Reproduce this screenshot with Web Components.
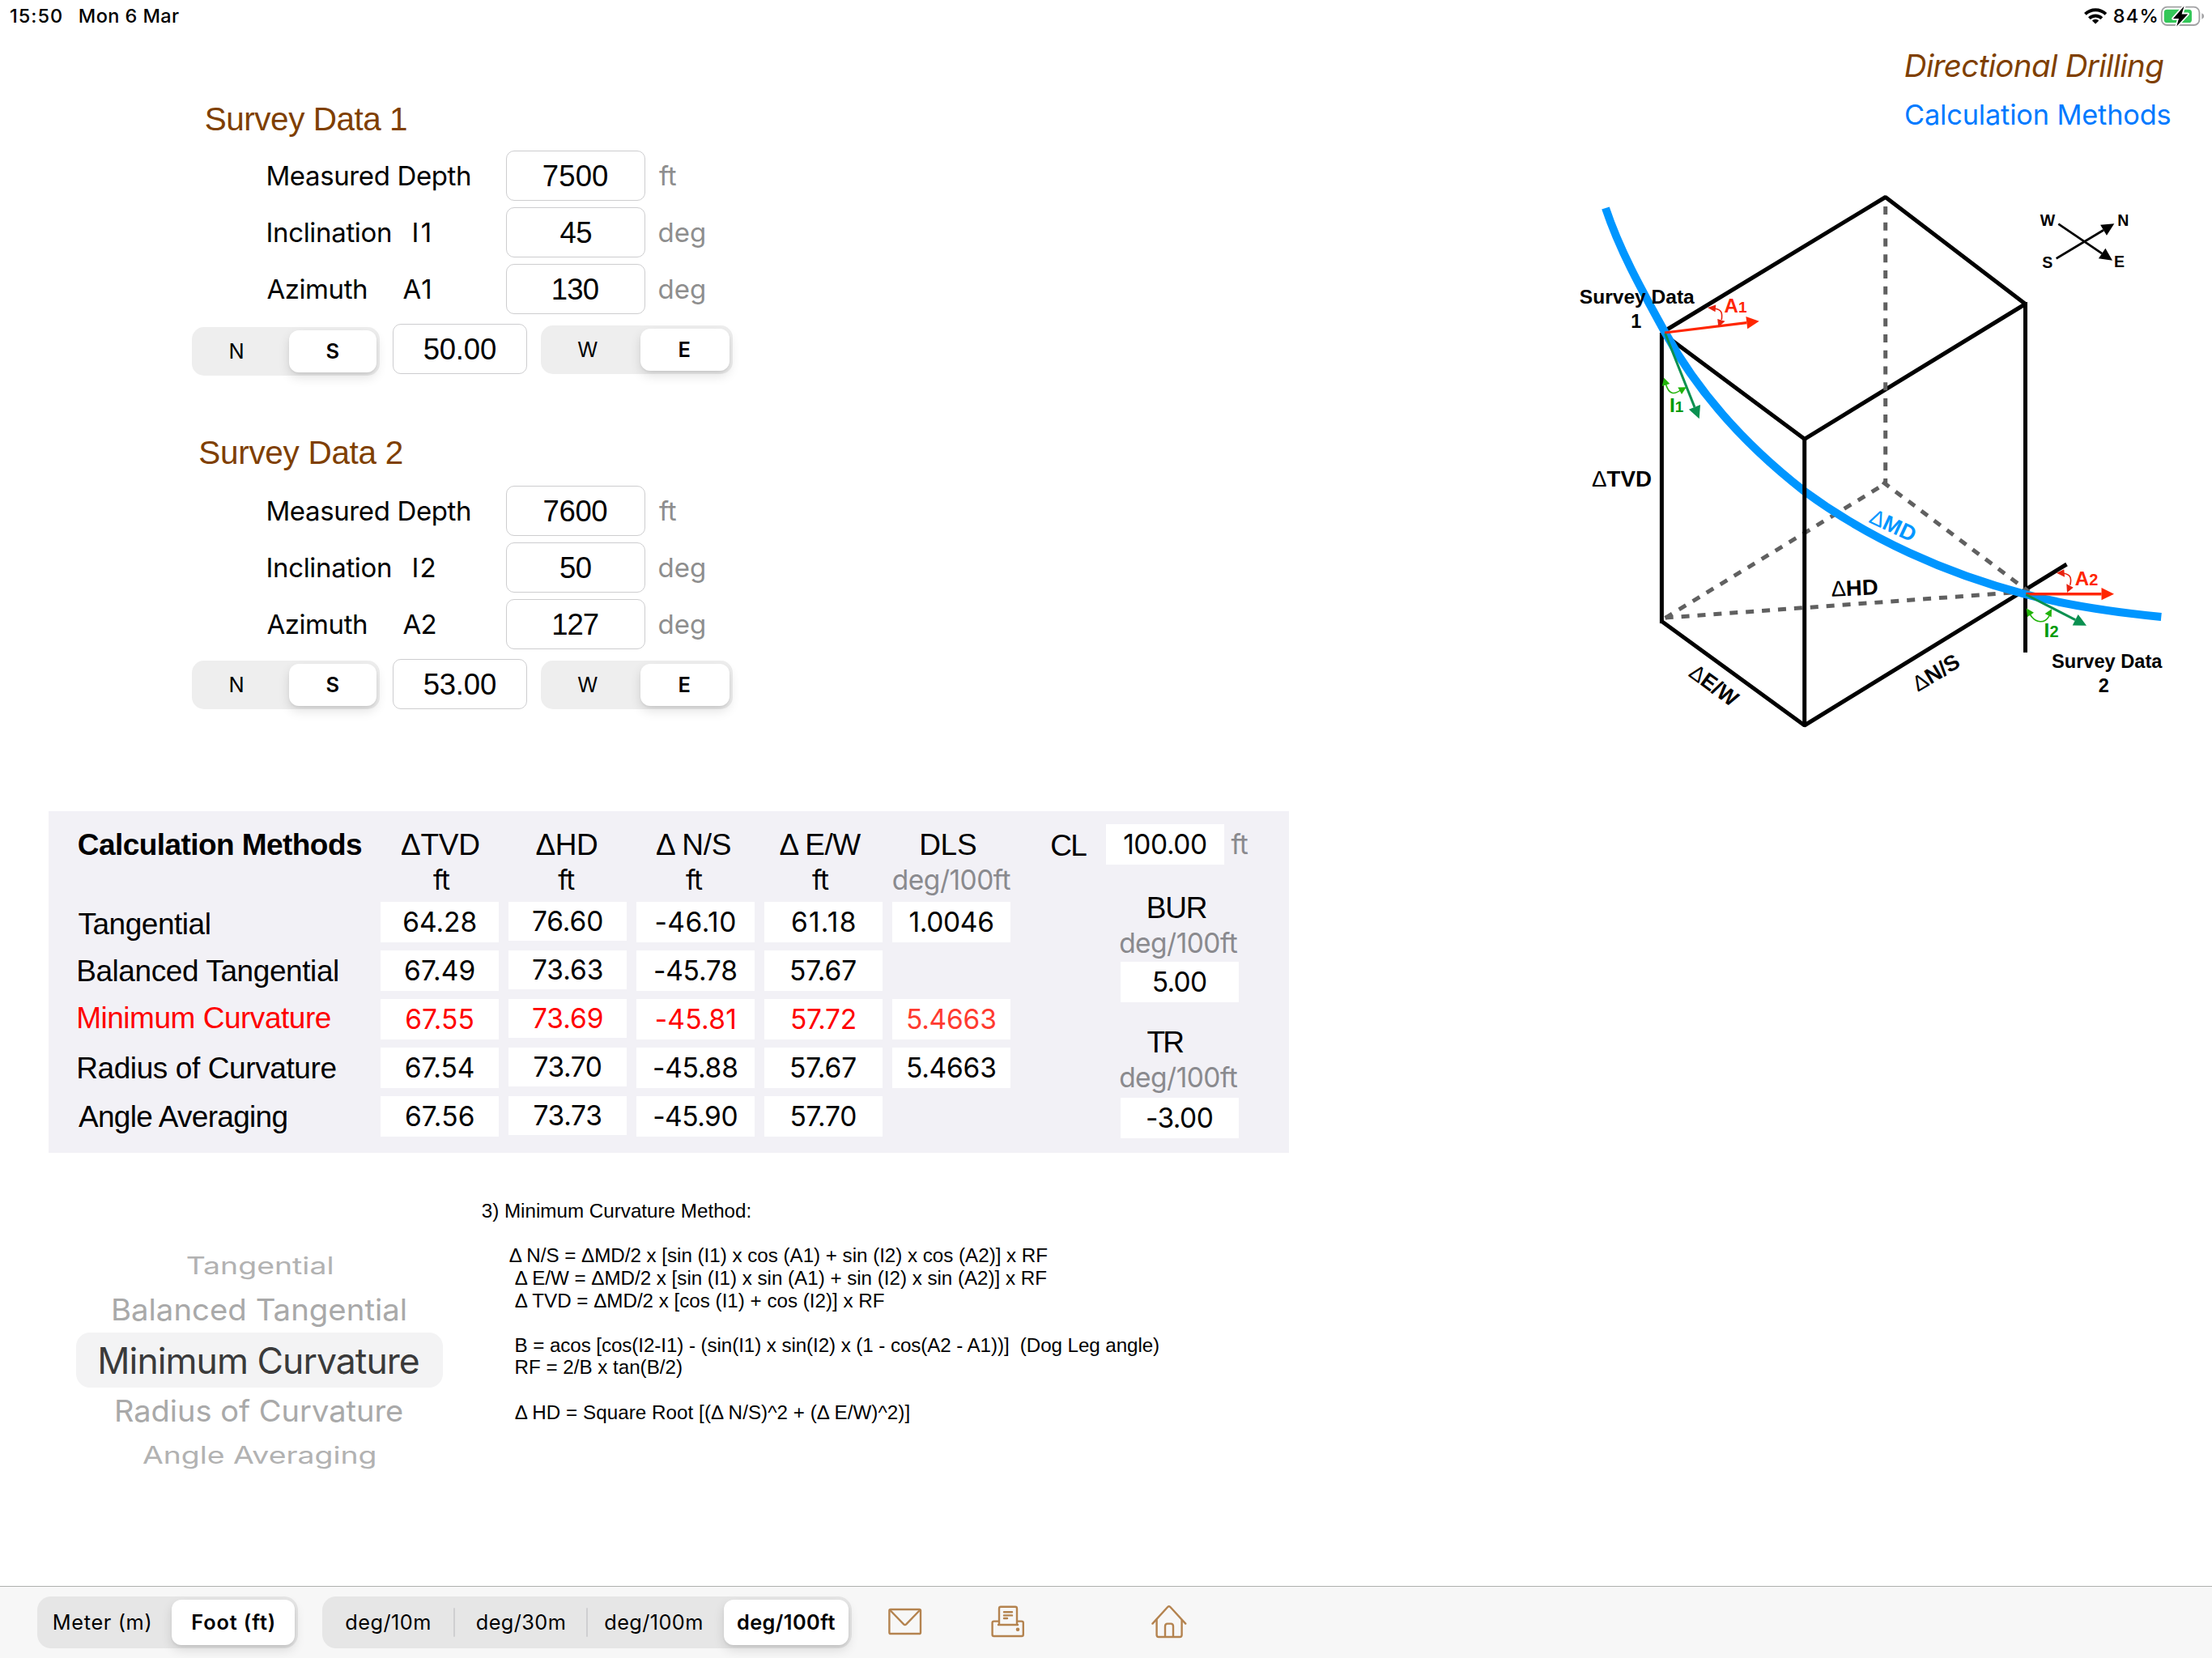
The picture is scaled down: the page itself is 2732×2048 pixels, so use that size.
<!DOCTYPE html>
<html lang="en">
<head>
<meta charset="utf-8">
<title>Directional Drilling</title>
<style>
  html, body { margin: 0; padding: 0; background: #fff; }
  body { width: 2732px; height: 2048px; overflow: hidden; font-family: Inter, "Liberation Sans", sans-serif; color: #000; }
</style>
</head>
<body>
<drilling-app></drilling-app>
<script>
const FONTS = { i: 'Inter, sans-serif', h: '"Liberation Sans", sans-serif' };
const CAPS = { i: 0.727, h: 0.688 };
const pen = document.createElement('canvas').getContext('2d');

/* One line of text whose box is its cap height by its drawn width. */
class CapText extends HTMLElement {
  connectedCallback() {
    if (this.shadowRoot) return;
    const a = n => this.getAttribute(n);
    const f = a('f') || 'i', s = +a('s'), wt = a('b') || 400;
    const it = this.hasAttribute('italic') ? 'italic' : 'normal';
    const text = this.textContent;
    /* Side bearings come from a tenfold size, where whole-pixel bounds lose nothing. */
    pen.font = `${it} ${wt} ${s * 10}px ${FONTS[f]}`;
    const big = pen.measureText(text);
    const lsb = -big.actualBoundingBoxLeft / 10;
    const rsb = (big.width - big.actualBoundingBoxRight) / 10;
    pen.font = `${it} ${wt} ${s}px ${FONTS[f]}`;
    const ink = pen.measureText(text).width - lsb - rsb;
    const w = a('w') ? +a('w') : ink;
    const dy = f === 'h' ? 0.8 : 0;
    let fit = dy ? `transform:translateY(${dy}px);` : '';
    if (this.hasAttribute('stretch')) fit = `transform-origin:${lsb}px 50%;transform:scaleX(${w / ink});`;
    else if (text.length > 1) fit += `letter-spacing:${(w - ink) / (text.length - 1)}px;`;
    const h = (s * CAPS[f]).toFixed(2);
    this.attachShadow({ mode: 'open' }).innerHTML = `<style>
      :host{display:block;flex:none;width:${w.toFixed(1)}px;height:${h}px;${a('c') ? `color:${a('c')};` : ''}}
      span{display:block;width:max-content;margin-left:${(-lsb).toFixed(2)}px;white-space:pre;
        font:${it} ${wt} ${s}px/${h}px ${FONTS[f]};${fit}}
    </style><span><slot></slot></span>`;
  }
}
customElements.define('cap-text', CapText);

const T = (text, s, w, o = '') => `<cap-text s="${s}" w="${w}" ${o}>${text}</cap-text>`;
/* Flex row / column: every item is [start, size, markup]; the gap to the previous one becomes its margin. */
const flow = (dir, from, items) => {
  let at = from;
  return items.map(([p, size, html, extra = '']) => {
    const gap = (p - at).toFixed(1); at = p + size;
    return dir === 'row'
      ? `<div style="flex:none;width:${size}px;margin-left:${gap}px;${extra}">${html}</div>`
      : `<div style="flex:none;height:${size}px;margin-top:${gap}px;${extra}">${html}</div>`;
  }).join('');
};
const row = (from, items, st = '') => `<div style="display:flex;align-items:flex-start;${st}">${flow('row', from, items)}</div>`;
const col = (from, items, st = '') => `<div style="display:flex;flex-direction:column;align-items:flex-start;${st}">${flow('col', from, items)}</div>`;
/* Column item standing on a baseline. */
const base = (y, x, text, s, w, f = 'i', o = '') => {
  const h = s * CAPS[f];
  return [y + 0.8 - h, h, T(text, s, w, `f="${f}" ${o}`), `margin-left:${x}px`];
};

const define = (name, make) => customElements.define(name, class extends HTMLElement {
  connectedCallback() {
    if (!this.shadowRoot) this.attachShadow({ mode: 'open' }).innerHTML = make(this);
  }
});

define('value-field', el => `<style>
  :host{display:flex;align-items:center;justify-content:center;box-sizing:border-box;width:${el.getAttribute('width')}px;height:${el.getAttribute('height')}px;background:#fff;}
  :host([bordered]){border:1.5px solid #cdcdcf;border-radius:10px;}
</style><slot></slot>`);

define('segment-set', el => `<style>
  :host{display:flex;box-sizing:border-box;border-radius:${el.getAttribute('r') || 15}px;background:${el.getAttribute('bg') || '#eeeeee'};
    height:${el.getAttribute('h')}px;padding:4px 4px;align-items:stretch;}
</style><slot></slot>`);

define('segment-item', el => `<style>
  :host{display:flex;flex:none;box-sizing:border-box;align-items:center;justify-content:center;width:${el.getAttribute('width')}px;border-radius:12px;
    padding-right:${el.getAttribute('trail') || 0}px;}
  :host([on]){background:#fff;box-shadow:0 6px 14px rgba(0,0,0,.12),0 2px 3px rgba(0,0,0,.06);}
</style><slot></slot>`);

define('segment-rule', () => `<style>:host{display:block;flex:none;width:2px;height:36px;align-self:center;background:#cfcfd1;border-radius:1px}</style>`);

define('survey-panel', el => {
  const d = JSON.parse(el.getAttribute('data'));
  const field = (v, w, width = 172) => `<value-field bordered width="${width}" height="62">${T(v, 36.5, w, 'f="h"')}</value-field>`;
  const seg = (wA, trail, a, aw, b, bw, sel, total, mt) => `<segment-set h="60" style="width:${total}px;margin-top:${mt}px">
    <segment-item width="${wA}" trail="${trail}">${T(a, 25.5, aw)}</segment-item>
    <segment-item on width="${sel}">${T(b, 25.5, bw, 'b="600"')}</segment-item></segment-set>`;
  return `<style>
    :host{display:block;}
    .title{margin-left:${d.tx}px;margin-bottom:${d.gap}px;}
  </style>
  <div class="title">${T('Survey Data ' + d.n, 40.5, d.tw, 'f="h" c="#7f3f00"')}</div>
  ${[['Measured Depth', 249, '', 0, 0, d.v[0], d.vw[0], 'ft', 21],
     ['Inclination', 151, 'I' + d.n, 511, d.iw, d.v[1], d.vw[1], 'deg', 56],
     ['Azimuth', 122, 'A' + d.n, 498, d.aw, d.v[2], d.vw[2], 'deg', 56]].map(r => {
       const x0 = r[0] === 'Azimuth' ? 330 : 331;
       const items = [[x0, r[1], T(r[0], 33, r[1])]];
       if (r[2]) items.push([r[3], r[4], T(r[2], 33, r[4])]);
       items.push([625, 172, field(r[5], r[6])], [814, r[8], T(r[7], 33, r[8], 'c="#8e8e8e"')]);
       return row(0, items, 'align-items:center;height:62px;margin-bottom:8px');
     }).join('')}
  ${row(0, [
    [237, 232, seg(116, 12, 'N', 16.5, 'S', 14.8, 108, 232, d.ns)],
    [485, 166, field(d.v[3], 88.5, 166)],
    [667.7, 237, seg(119, 11, 'W', 23.5, 'E', 12.6, 110, 237, 2)]
  ], 'margin-top:12px;height:66px')}`;
});

define('results-table', () => {
  const red = 'c="#ff0000"';
  const val = (v, w, y, h = 50, o = '') => [y, h, `<value-field width="146" height="${h}">${T(v, 33.5, w, o)}</value-field>`];
  const ys = [1114, 1174, 1234, 1294, 1354];
  const data = [
    [['64.28', 88.5], ['67.49', 84.7], ['67.55', 82.5], ['67.54', 83.5], ['67.56', 83]],
    [['76.60', 85], ['73.63', 85], ['73.69', 85], ['73.70', 82], ['73.73', 82]],
    [['-46.10', 97], ['-45.78', 100], ['-45.81', 96.5], ['-45.88', 102], ['-45.90', 101.5]],
    [['61.18', 77], ['57.67', 80], ['57.72', 78], ['57.67', 80], ['57.70', 79]],
    [['1.0046', 102], null, ['5.4663', 108], ['5.4663', 108], null]
  ];
  const cells = (c, h) => data[c].map((d, r) => d && val(d[0], d[1], ys[r], h, r === 2 ? (c === 4 ? 'c="#ff3b30"' : red) : '')).filter(Boolean);
  const column = (c, h, head, unit) => col(1002, [head, unit, ...cells(c, h)]);
  const H = (x, t, w) => base(1055, x, t, 37, w, 'h');
  const U = (x, t = 'ft', w = 20.5, o = '') => base(1098.7, x, t, 33.5, w, 'i', o);
  const gray = 'c="#8a8a8e"';
  return `<style>:host{display:block;width:1532px;height:422px;background:#f2f1f6}</style>
  ${row(60, [
    [97, 349, col(1002, [
      base(1055, 0, 'Calculation Methods', 37, 349, 'h', 'b="700"'),
      base(1153, 0, 'Tangential', 37, 161.5, 'h'),
      base(1211, 0, 'Balanced Tangential', 37, 320.5, 'h'),
      base(1269, 0, 'Minimum Curvature', 37, 310.8, 'h', red),
      base(1330.7, 0, 'Radius of Curvature', 37, 317.5, 'h'),
      base(1390.7, 0, 'Angle Averaging', 37, 259, 'h')])],
    [470, 146, column(0, 50, H(25.6, 'ΔTVD', 96), U(65))],
    [628, 146, column(1, 48, H(34, 'ΔHD', 75.5), U(61.3))],
    [786, 146, column(2, 50, H(24.5, 'Δ N/S', 93.5), U(61))],
    [944, 146, column(3, 50, H(19, 'Δ E/W', 102.5), U(59))],
    [1102, 146, column(4, 50, H(36, 'DLS', 67), U(1.4, 'deg/100ft', 144.6, gray))],
    [1299, 43, col(1002, [base(1056, 0, 'CL', 37, 43, 'h')])],
    [1366, 176, col(1002, [
      [1018, 50, row(1366, [
        [1366, 146, `<value-field width="146" height="50">${T('100.00', 33.5, 100.6)}</value-field>`],
        [1520.6, 20.6, T('ft', 33.5, 20.6, gray)]], 'align-items:center')],
      base(1133, 52.7, 'BUR', 37, 71.5, 'h'),
      base(1176.7, 17.7, 'deg/100ft', 33.5, 144.4, 'i', gray),
      [1188, 50, `<value-field width="146" height="50" style="margin-left:18px">${T('5.00', 33.5, 64.5)}</value-field>`],
      base(1299, 51, 'TR', 37, 44.6, 'h'),
      base(1343, 17.7, 'deg/100ft', 33.5, 144.4, 'i', gray),
      [1356, 50, `<value-field width="146" height="50" style="margin-left:18px">${T('-3.00', 33.5, 80)}</value-field>`]
    ])]
  ])}`;
});

define('method-picker', () => `<style>
  :host{display:block;width:453px}
  .on{display:flex;height:68px;align-items:center;justify-content:center;border-radius:17px;background:#f3f3f4;width:453px}
  .on cap-text{margin-top:1.5px}
</style>
${col(1440, [
  base(1573.7, 137, 'Tangential', 29.5, 178.5, 'i', 'stretch c="#b2b2b2"'),
  base(1631, 46.2, 'Balanced Tangential', 37, 360.5, 'i', 'stretch c="#a9a9a9"'),
  [1646, 68, `<div class="on">${T('Minimum Curvature', 44.5, 393.4, 'c="#3a3a3a"')}</div>`],
  base(1756.4, 49.6, 'Radius of Curvature', 37, 353, 'i', 'stretch c="#a9a9a9"'),
  base(1807.3, 82.4, 'Angle Averaging', 29.5, 286.6, 'i', 'stretch c="#b2b2b2"')
])}`);

define('method-notes', () => {
  const L = (y, x, t, w) => base(y, x - 595.6, t, 24.2, w, 'h');
  return `<style>:host{display:block}</style>${col(1440, [
    L(1503, 595.6, '3) Minimum Curvature Method:', 330.5),
    L(1558, 629.5, 'Δ N/S = ΔMD/2 x [sin (I1) x cos (A1) + sin (I2) x cos (A2)] x RF', 665),
    L(1585.7, 636.4, 'Δ E/W = ΔMD/2 x [sin (I1) x sin (A1) + sin (I2) x sin (A2)] x RF', 657),
    L(1613.3, 636.4, 'Δ TVD = ΔMD/2 x [cos (I1) + cos (I2)] x RF', 456.5),
    L(1668.3, 637.5, 'B = acos [cos(I2-I1) - (sin(I1) x sin(I2) x (1 - cos(A2 - A1))]  (Dog Leg angle)', 794.5),
    L(1696, 637.5, 'RF = 2/B x tan(B/2)', 204),
    L(1751.3, 636.4, 'Δ HD = Square Root [(Δ N/S)^2 + (Δ E/W)^2)]', 490)
  ])}`;
});

/* Shaft from (x1,y1) to a filled head whose tip is (x2,y2). */
const arrow = (x1, y1, x2, y2, c, w, len = 15.5, half = 7.6) => {
  const d = Math.hypot(x2 - x1, y2 - y1), ux = (x2 - x1) / d, uy = (y2 - y1) / d;
  const bx = x2 - ux * len, by = y2 - uy * len;
  return `<path d="M${x1} ${y1}L${bx} ${by}" stroke="${c}" stroke-width="${w}"/>
    <path d="M${x2} ${y2}L${bx - uy * half} ${by + ux * half}L${bx + uy * half} ${by - ux * half}Z" fill="${c}" stroke="none"/>`;
};

define('trajectory-diagram', () => {
  const dl = '<tspan font-weight="400">Δ</tspan>';
  return `<style>
  :host{display:block;width:832px;height:720px}
  svg{display:block} text{font-family:"Liberation Sans",sans-serif;font-weight:700;stroke:none}
</style>
<svg width="832" height="720" viewBox="1900 200 832 720" fill="none">
  <g stroke="#000" stroke-width="5">
    <path d="M2052.4 411V770"/>
    <path d="M2052.4 411L2328.7 243.5L2501.5 375.5L2228.7 542.3Z" stroke-linejoin="bevel"/>
    <path d="M2501.5 373V806"/>
    <path d="M2052.4 767.5L2228.7 896L2552.5 697" stroke-linejoin="bevel"/>
  </g>
  <g stroke="#606060" stroke-width="5">
    <path d="M2328.7 255V598" stroke-dasharray="10 9.76"/>
    <path d="M2056.7 763.3L2328.7 597.3" stroke-dasharray="10 9.92"/>
    <path d="M2056.7 763.1L2500 731" stroke-dasharray="10 9.95"/>
    <path d="M2325.3 595.3L2506 731" stroke-dasharray="10 9.83"/>
  </g>
  <path d="M1983 257C2001 311 2029.2 361 2056.7 411C2099 488 2159.2 552.6 2228.5 606.7C2309 666 2404.5 708.8 2501.3 734C2556 748.4 2612.6 756.3 2669.3 762" stroke="#0096ff" stroke-width="10"/>
  <path d="M2228.7 541V897" stroke="#000" stroke-width="5"/>
  ${arrow(2056, 411, 2172.7, 396.7, '#ff2600', 3.2)}
  ${arrow(2056.7, 412, 2098.7, 517.3, '#0a9050', 3)}
  ${arrow(2502.3, 733.7, 2611, 733.7, '#ff2600', 3.4)}
  ${arrow(2502.3, 734.5, 2577, 772.7, '#0a9050', 3)}
  ${arrow(2542.3, 276.7, 2609, 321.7, '#000', 2.7)}
  ${arrow(2539.7, 319.3, 2611.3, 276.3, '#000', 2.7)}
  <g stroke="#e8220f" stroke-width="1.6">
    <path d="M2118 381.3C2126 382.5 2127.5 386 2126.3 395"/>
    <path d="M2109 380L2119.3 376.5L2118.5 385.2ZM2122.3 404L2121.2 394L2130.6 396.8Z" fill="#e8220f" stroke="none"/>
    <path d="M2549 708.3C2557 709.5 2559 714 2556.7 722.7"/>
    <path d="M2540 707.7L2549.3 703.3L2550 712.7ZM2553 732L2552.3 721.3L2560.7 725.7Z" fill="#e8220f" stroke="none"/>
  </g>
  <g stroke="#22b40a" stroke-width="1.6">
    <path d="M2057.6 475C2061 487 2068 488 2076 481.5"/>
    <path d="M2055.2 466.7L2052.8 477L2062.3 474ZM2082.8 478.3L2072.3 478.6L2077 487Z" fill="#22b40a" stroke="none"/>
    <path d="M2507.3 759C2514 770 2526 771 2531.3 760"/>
    <path d="M2502.7 751.3L2504 762L2512 756.7ZM2534 752.3L2525.6 758L2533.7 762.3Z" fill="#22b40a" stroke="none"/>
  </g>
  <g font-size="23.5" fill="#000">
    <text x="1950.8" y="375" textLength="142" lengthAdjust="spacingAndGlyphs">Survey Data</text><text x="2014.2" y="405">1</text>
    <text x="2534" y="825" textLength="136.5" lengthAdjust="spacingAndGlyphs">Survey Data</text><text x="2591.8" y="855.3">2</text>
  </g>
  <g font-size="24" fill="#ff2600">
    <text x="2129.6" y="385.7">A<tspan font-size="19">1</tspan></text>
    <text x="2562.8" y="723.3">A<tspan font-size="20">2</tspan></text>
  </g>
  <g font-size="24.5" fill="#009a08">
    <text x="2062" y="509">I<tspan font-size="19">1</tspan></text>
    <text x="2524.6" y="787">I<tspan font-size="20">2</tspan></text>
  </g>
  <g font-size="27" fill="#000">
    <text x="1966" y="601" textLength="74" lengthAdjust="spacingAndGlyphs">${dl}TVD</text>
    <text transform="translate(2262 736.7) rotate(-2.5)" textLength="58" lengthAdjust="spacingAndGlyphs">${dl}HD</text>
    <text transform="translate(2084.3 834.3) rotate(36)" textLength="67" lengthAdjust="spacingAndGlyphs">${dl}E/W</text>
    <text transform="translate(2368.8 855) rotate(-31)" textLength="63" lengthAdjust="spacingAndGlyphs">${dl}N/S</text>
    <text transform="translate(2307 644.7) rotate(25)" textLength="60" lengthAdjust="spacingAndGlyphs" fill="#0096ff">${dl}MD</text>
  </g>
  <g font-size="19.5" fill="#000">
    <text x="2519.8" y="278.5">W</text><text x="2615.3" y="278.5">N</text>
    <text x="2522.3" y="331.3">S</text><text x="2611" y="330.3">E</text>
  </g>
</svg>`;
});

define('status-bar', () => `<style>:host{display:flex;height:40px;align-items:flex-start}
  svg{display:block}</style>
${row(0, [
  [13, 63, T('15:50', 23.5, 63, 'b="450"'), 'margin-top:11px'],
  [98.6, 122, T('Mon 6 Mar', 23.5, 122, 'b="450"'), 'margin-top:11px'],
  [2572, 32, `<svg width="32" height="40" viewBox="2572 0 32 40" fill="none" stroke="#000" stroke-width="3.9">
    <path d="M2575.4 17.4A18.5 18.5 0 0 1 2600.9 17.4"/><path d="M2580.4 22.6A11.2 11.2 0 0 1 2595.9 22.6"/>
    <path d="M2588.1 29.6L2583.9 25.4A6 6 0 0 1 2592.3 25.4Z" fill="#000" stroke="none"/></svg>`],
  [2611, 52.3, T('84%', 23.5, 52.3, 'b="450"'), 'margin-top:11px'],
  [2668, 56, `<svg width="56" height="40" viewBox="2668 0 56 40">
    <rect x="2669.8" y="8.6" width="46.6" height="22.4" rx="6.8" fill="none" stroke="#a2a2a4" stroke-width="1.8"/>
    <path d="M2719.4 16.2Q2722.2 17.3 2722.2 20T2719.4 23.8Z" fill="#a2a2a4"/>
    <rect x="2672.8" y="11.8" width="34.2" height="16.2" rx="3.6" fill="#34c759"/>
    <path d="M2697.6 7.6L2684 23H2691L2688.3 32.4L2702.2 17.4H2694.6Z" fill="#000" stroke="#fff" stroke-width="3.6" stroke-linejoin="round" paint-order="stroke"/></svg>`]
])}`);

define('tool-bar', () => {
  const seg = (width, text, w, trail = 0, on) => `<segment-item width="${width}" trail="${trail}" ${on ? 'on' : ''}>${T(text, 25.3, w, `b="${on ? 600 : 400}"`)}</segment-item>`;
  const icon = (w, x, body) => `<svg width="${w}" height="60" viewBox="${x} 1975 ${w} 60" fill="none" stroke="#b4834f" stroke-width="2.4" stroke-linejoin="round" stroke-linecap="round">${body}</svg>`;
  return `<style>:host{display:block;height:89px;box-sizing:border-box;border-top:1px solid #aeb1ae;background:#f7f7f7}svg{display:block}</style>
  ${row(0, [
    [46, 322, `<segment-set h="64" r="17" bg="#e6e6e6">${seg(162, 'Meter (m)', 118, 10)}${seg(152, 'Foot (ft)', 100, 0, 1)}</segment-set>`],
    [398, 654, `<segment-set h="64" r="17" bg="#e6e6e6">${seg(158, 'deg/10m', 103, 4)}<segment-rule></segment-rule>${seg(162, 'deg/30m', 108)}<segment-rule></segment-rule>${seg(168, 'deg/100m', 119, 6)}${seg(154, 'deg/100ft', 120, 0, 1)}</segment-set>`],
    [1096, 44, icon(44, 1096, '<rect x="1098.4" y="1988" width="38.6" height="30" rx="1.6"/><path d="M1099.4 1989L1116.2 2006.4Q1117.7 2007.8 1119.2 2006.4L1136 1989"/>'), 'margin-top:3px'],
    [1223, 44, icon(44, 1223, '<path d="M1234 2006.2V1987Q1234 1984.8 1236 1984.8H1254Q1256 1984.8 1256 1987V2006.2"/><path d="M1233 2002.6H1227.5Q1225.6 2002.6 1225.6 2004.6V2019Q1225.6 2021 1227.5 2021H1261.8Q1263.8 2021 1263.8 2019V2004.6Q1263.8 2002.6 1261.8 2002.6H1257"/><path d="M1233 2007H1257"/><path d="M1240 1991.2H1250M1240 1995.4H1250M1240 1999H1244"/><ellipse cx="1257" cy="2012.8" rx="1.6" ry="1.6" fill="#b4834f" stroke-width="1.4"/>'), 'margin-top:3px'],
    [1421, 46, icon(46, 1421, '<path d="M1423.4 2005.6L1442.2 1985Q1443.8 1983.4 1445.4 1985L1464.3 2005.6"/><path d="M1428.6 2001V2019.6Q1428.6 2022 1431 2022H1457.2Q1459.6 2022 1459.6 2019.6V2001"/><path d="M1439 2021.5V2009Q1439 2005.6 1441.8 2005.6H1446.2Q1449 2005.6 1449 2009V2021.5"/>'), 'margin-top:3px']
  ], 'padding-top:12px')}`;
});

define('drilling-app', () => {
  const s1 = { n: 1, tx: 254, tw: 248, gap: 25, iw: 19.5, aw: 33, v: ['7500', '45', '130', '50.00'], vw: [79, 38, 56, 0], ns: 4 };
  const s2 = { n: 2, tx: 246.6, tw: 250, gap: 27, iw: 25.5, aw: 39.5, v: ['7600', '50', '127', '53.00'], vw: [77.5, 38, 55, 0], ns: 2 };
  const panel = d => `<survey-panel data='${JSON.stringify(d)}'></survey-panel>`;
  return `<style>
    :host{display:flex;flex-direction:column;width:2732px;height:2048px;background:#fff}
    main{display:flex;height:1919px}
    .left{width:1900px}.right{width:832px}
  </style>
  <status-bar></status-bar>
  <main>
    <div class="left">${col(40, [
      [133.1, 331, panel(s1)],
      [545.1, 331, panel(s2)],
      [1002, 422, '<results-table></results-table>', 'margin-left:60px'],
      [1440, 400, row(0, [[94, 453, '<method-picker></method-picker>'], [595.6, 900, '<method-notes></method-notes>']])]
    ])}</div>
    <div class="right">${col(40, [
      base(94.6, 453, 'Directional Drilling', 38.5, 319, 'i', 'italic c="#7f3f00"'),
      base(153.8, 453.7, 'Calculation Methods', 34.3, 326.5, 'i', 'c="#007aff"'),
      [200, 720, '<trajectory-diagram></trajectory-diagram>']
    ])}</div>
  </main>
  <tool-bar></tool-bar>`;
});
</script>
</body>
</html>
